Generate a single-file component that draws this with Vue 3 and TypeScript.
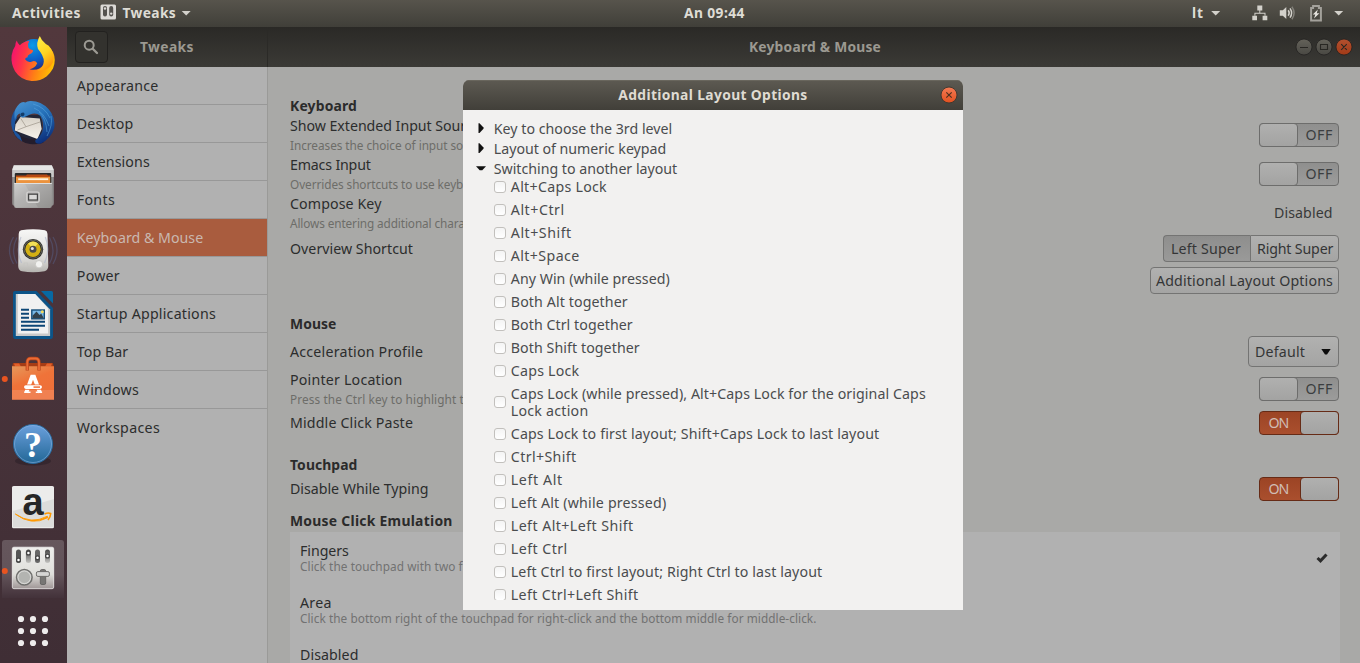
<script setup lang="ts">
interface Label {
  text: string
  /** Drawn width of the label in pixels. */
  w: number
}

const L = (text: string, w: number): Label => ({ text, w })

/** Spreads the letters of an element so that its text takes the given width. */
const vFit = {
  mounted(el: HTMLElement, binding: { value: number }) {
    const count = (el.textContent ?? '').length
    if (count < 2) return
    const range = document.createRange()
    range.selectNodeContents(el)
    const natural = range.getBoundingClientRect().width
    el.style.letterSpacing = `${(binding.value + 0.4 - natural) / (count - 1)}px`
  },
}

const pages: Label[] = [
  L('Appearance', 81),
  L('Desktop', 56),
  L('Extensions', 72.5),
  L('Fonts', 37.5),
  L('Keyboard & Mouse', 126),
  L('Power', 42.5),
  L('Startup Applications', 138.5),
  L('Top Bar', 51),
  L('Windows', 61.5),
  L('Workspaces', 82.5),
]
const current = 'Keyboard & Mouse'

const inputRows = [
  { label: L('Show Extended Input Sources', 197), note: L('Increases the choice of input sources in the Settings application.', 351), control: 'switch' },
  { label: L('Emacs Input', 80.5), note: L('Overrides shortcuts to use keybindings from the Emacs editor.', 339), control: 'switch' },
  { label: L('Compose Key', 91), note: L('Allows entering additional characters.', 204), control: 'value' },
]

const emulation = [
  { label: L('Fingers', 48.5), note: L('Click the touchpad with two fingers for right-click and three fingers for middle-click.', 468), on: true },
  { label: L('Area', 31), note: L('Click the bottom right of the touchpad for right-click and the bottom middle for middle-click.', 516), on: false },
  { label: L('Disabled', 58), note: L("Don't use mouse click emulation.", 178), on: false },
]

const groups = [
  { label: L('Key to choose the 3rd level', 178), open: false },
  { label: L('Layout of numeric keypad', 172), open: false },
  { label: L('Switching to another layout', 183), open: true },
]

const options: Label[][] = [
  [L('Alt+Caps Lock', 95.5)],
  [L('Alt+Ctrl', 53)],
  [L('Alt+Shift', 60)],
  [L('Alt+Space', 68)],
  [L('Any Win (while pressed)', 158.5)],
  [L('Both Alt together', 116.5)],
  [L('Both Ctrl together', 121.5)],
  [L('Both Shift together', 128.5)],
  [L('Caps Lock', 68)],
  [L('Caps Lock (while pressed), Alt+Caps Lock for the original Caps', 414.5), L('Lock action', 77)],
  [L('Caps Lock to first layout; Shift+Caps Lock to last layout', 368)],
  [L('Ctrl+Shift', 65)],
  [L('Left Alt', 51)],
  [L('Left Alt (while pressed)', 155)],
  [L('Left Alt+Left Shift', 122)],
  [L('Left Ctrl', 56)],
  [L('Left Ctrl to first layout; Right Ctrl to last layout', 311)],
  [L('Left Ctrl+Left Shift', 127)],
]

const gridDots = [21, 33, 45]
</script>

<template>
  <div class="screen">
    <header class="topbar">
      <div class="tb-left">
        <span v-fit="68">Activities</span>
        <svg class="app-glyph" width="17" height="17" viewBox="0 0 17 17">
          <rect x="0.5" y="0.5" width="15.5" height="15" rx="1.5" fill="#dcdad6" />
          <rect x="3" y="2" width="4" height="10.5" rx="2" fill="#55534f" />
          <rect x="9.2" y="2" width="4" height="10.5" rx="2" fill="#55534f" />
          <circle cx="5" cy="4.5" r="1.2" fill="#dcdad6" />
          <circle cx="11.2" cy="9.6" r="1.2" fill="#dcdad6" />
        </svg>
        <span v-fit="53">Tweaks</span>
        <i class="down"></i>
      </div>
      <div class="tb-clock"><span v-fit="60">An 09:44</span></div>
      <div class="tb-right">
        <span v-fit="10.5">lt</span>
        <i class="down lang"></i>
        <svg class="net" width="16" height="16" viewBox="0 0 16 16" fill="#d3d1cb">
          <path d="M5.3 0.5h5v5h-5zM0.3 10.7h4.7v4.6H0.3zM10.6 10.7h4.7v4.6h-4.7z" />
          <path d="M7.3 5h1v2.8h5.2v3h-1V8.7H3.4v2.1h-1v-3h4.9z" />
        </svg>
        <svg class="vol" width="16" height="16" viewBox="0 0 16 16">
          <path d="M0.8 5.3h3L7.3 2v12L3.8 10.7h-3z" fill="#d3d1cb" />
          <path d="M9.2 5.2q2 2.8 0 5.6" fill="none" stroke="#d3d1cb" stroke-width="1.5" />
          <path d="M11 3.4q3.2 4.6 0 9.2" fill="none" stroke="#d3d1cb" stroke-width="1.5" />
          <path d="M12.9 1.7q4.4 6.3 0 12.6" fill="none" stroke="#817f78" stroke-width="1.5" />
        </svg>
        <svg class="bat" width="12" height="17" viewBox="0 0 12 17">
          <path d="M1.1 3.1h2V1.1h5.8v2h2V15.4H1.1z" fill="none" stroke="#a3a19b" stroke-width="2" />
          <path d="M7.8 4.6L2.8 9.6h2.5L4 13.4l5.4-5.2H6.8z" fill="#e6e4df" />
        </svg>
        <i class="down last"></i>
      </div>
    </header>

    <div class="desk">
      <nav class="dock">
        <svg class="slot" viewBox="0 0 67 64">
          <defs>
            <linearGradient id="ffBody" x1="0" y1="0.35" x2="1" y2="0.6">
              <stop offset="0" stop-color="#f5156c" />
              <stop offset="0.28" stop-color="#ff3647" />
              <stop offset="0.6" stop-color="#ff7e16" />
              <stop offset="1" stop-color="#ffc400" />
            </linearGradient>
            <linearGradient id="ffTail" x1="0" y1="0" x2="0.4" y2="1">
              <stop offset="0" stop-color="#fff14a" />
              <stop offset="0.6" stop-color="#ffd320" />
              <stop offset="1" stop-color="#ff9a0c" />
            </linearGradient>
            <radialGradient id="ffGlobe" cx="0.45" cy="0.2" r="0.8">
              <stop offset="0" stop-color="#0a9be8" />
              <stop offset="0.6" stop-color="#0d5cc4" />
              <stop offset="1" stop-color="#2a2877" />
            </radialGradient>
          </defs>
          <circle cx="34" cy="28" r="16" fill="url(#ffGlobe)" />
          <path
            d="M16.7 13.6Q17.6 16.5 19.8 18.2Q23.6 14.3 29.3 14.1Q27.4 16.6 28.3 20.6Q29.3 22.8 33 23.3Q33.2 25.8 29.6 27.3Q27.4 28.4 27.4 30.5Q25 30.2 25.2 32.6Q28.2 36.3 32 34.4Q35.5 33.2 37.2 36.3Q35 41.3 29.5 42.3Q39 44.5 43.7 37.2Q46 32 43.3 25.5Q48.5 28 50 21L53.2 25.5Q56.5 33 53 41.5Q50.5 46 46.5 49.4Q40 54.2 31.5 53.9Q20.5 52.8 15 44.2Q10.8 36.8 11.6 28.5Q12.5 22.5 15.2 19Q15.3 16 16.7 13.6z"
            fill="url(#ffBody)"
          />
          <path d="M39.8 9Q35.8 15.8 38 22Q43.8 28.6 43.8 34.5Q43.3 41.6 37.2 43.5Q49 44.2 52.8 35.5Q54.8 27.6 51.2 22Q49 18 45.8 16.9Q41.3 13.6 39.8 9z" fill="url(#ffTail)" />
        </svg>

        <svg class="slot" viewBox="0 0 67 64">
          <defs>
            <linearGradient id="tbBird" x1="0.2" y1="0" x2="0.7" y2="1">
              <stop offset="0" stop-color="#4590cf" />
              <stop offset="0.45" stop-color="#246fb8" />
              <stop offset="1" stop-color="#0c2d78" />
            </linearGradient>
            <linearGradient id="tbMail" x1="0" y1="0" x2="0" y2="1">
              <stop offset="0" stop-color="#d8d2c8" />
              <stop offset="1" stop-color="#f7f2ea" />
            </linearGradient>
          </defs>
          <path d="M13 41Q18 51 30 53Q40 54 44 51L40 41z" fill="#241d2c" />
          <path d="M15.5 18Q10.5 25 11.3 34Q13 45 22 50.5Q20.5 44 16 39.5L17 27z" fill="#1d559f" />
          <path d="M15 31Q17 24.5 24 24L40 24Q45 35 40 47L30 48Q19 46 14.5 39z" fill="#232638" />
          <path d="M15.5 33.5L20.5 26L39.8 27.5L41.7 38L37.4 48L14.8 39.500z" fill="url(#tbMail)" />
          <path d="M20.8 27.5L26 35.7L40 31M26 35.7L17.5 39" fill="none" stroke="#a59d92" stroke-width="0.8" />
          <path d="M30 10Q27 10 25.5 11.5Q20.5 9 15.5 18Q13.5 23 15 29Q16.5 23.500 20 22.500Q19.5 27 23.5 26.500Q27 25 30 23.500Q36 21 40.5 25Q44.5 32 42.5 40Q41 45 35.2 49.500Q35 53.500 41 52.500Q51 47.500 54.300 37Q55.500 26 48.500 18Q40.500 9.500 30 10z" fill="url(#tbBird)" />
          <path d="M33 13Q45 16 50 27M34 17Q44 21 49 35M39 21Q46 27 47 41M51 25Q53 34 47 45" fill="none" stroke="#5ba7df" stroke-width="0.9" opacity="0.6" />
          <path d="M20.5 24.600Q19.8 21.500 23.5 21.500Q25.5 22.800 23.800 24.700Q22 26 20.5 24.600z" fill="#123c69" />
        </svg>

        <svg class="slot" viewBox="0 3 67 64">
          <defs>
            <linearGradient id="fileFront" x1="0" y1="0" x2="1" y2="1">
              <stop offset="0" stop-color="#c7c7c6" />
              <stop offset="0.4" stop-color="#aaa9a8" />
              <stop offset="1" stop-color="#92918f" />
            </linearGradient>
          </defs>
          <path d="M12.2 17L13.8 13.300h38l2 3.900v33.500q0 3-2 3H14.2q-2 0-2-3z" fill="#8f8e8d" />
          <path d="M12.2 18L13.800 13.300h38l2 4.700z" fill="#e6e6e5" />
          <path d="M12.2 18h41.600v7H12.2z" fill="#c9c9c8" />
          <rect x="14.8" y="21" width="36.4" height="10" rx="1" fill="#2c2b2b" />
          <path d="M16 23.500h10l1-1h20l1 1h2v8H16z" fill="#b84a12" />
          <rect x="16" y="25" width="34.2" height="6.500" fill="#ec933e" />
          <rect x="18.2" y="26.300" width="30" height="1.800" fill="#fff4df" />
          <path d="M14.2 31.3h37.6v22.700q0 2-2 2H16.2q-2 0-2-2z" fill="url(#fileFront)" />
          <path d="M14.2 31.500h37.600" stroke="#e0e0df" />
          <path d="M14.2 32H25L38 55.500H14.2z" fill="#fff" opacity="0.12" />
          <rect x="26.800" y="40" width="12.400" height="10.300" rx="1.8" fill="#a8a7a6" stroke="#d5d4d3" stroke-width="1.2" />
          <rect x="28.600" y="42.200" width="8.800" height="5.800" fill="#d9d8d7" stroke="#454545" stroke-width="1.2" />
        </svg>

        <svg class="slot" viewBox="0 0 67 64">
          <defs>
            <linearGradient id="spk" x1="0" y1="0" x2="0" y2="1">
              <stop offset="0" stop-color="#f7f7f6" />
              <stop offset="0.7" stop-color="#d9d8d5" />
              <stop offset="1" stop-color="#b5b4b0" />
            </linearGradient>
          </defs>
          <g fill="none" stroke="#58648f" stroke-width="1.3" opacity="0.45">
            <path d="M17 18.5Q10 31.5 17 44.5M13.5 18Q5.5 31.5 13.5 45M49.5 18.5Q56.5 31.5 49.5 44.5M53 18Q61 31.5 53 45" />
          </g>
          <path d="M21 11.3Q33 9.3 45 11.3Q47.500 12 47.5 15L48.3 47Q48.3 51 44.5 52.3Q33 54 22 52.3Q18.3 51.5 18.2 47L18.7 15Q18.7 12 21 11.3z" fill="url(#spk)" />
          <circle cx="33" cy="30.2" r="10.2" fill="#2f2f2c" />
          <circle cx="33" cy="30.2" r="9" fill="none" stroke="#77756b" stroke-width="0.7" />
          <circle cx="33" cy="30.2" r="7.7" fill="#d3b014" />
          <path d="M28 24.5Q33 20.5 38 24.5L33 30z" fill="#f1df58" />
          <circle cx="33" cy="30.2" r="3.5" fill="#4a4a4a" />
          <circle cx="32.3" cy="29.6" r="1.5" fill="#e5e5e5" />
          <rect x="24" y="44" width="3.5" height="3.5" fill="none" stroke="#c6c5c2" stroke-width="0.7" />
          <circle cx="39" cy="45.2" r="3.7" fill="#f2f2f0" stroke="#c4c3bf" stroke-width="0.8" />
          <path d="M21 18Q15.5 31 21.5 44M45.3 18Q50.5 31 44.5 44" stroke="#aab2ca" fill="none" stroke-width="1.2" opacity="0.6" />
        </svg>

        <svg class="slot" viewBox="0 0 67 64">
          <path d="M15 8h21.5L53 25v28q0 3-2.2 3H15.2q-2.2 0-2.2-3V10q0-2 2-2z" fill="#0c5488" />
          <path d="M41 8h10.5q1.5 0 1.5 1.5v11z" fill="#0869a3" />
          <path d="M15.8 11h19.3l15 15.5v26.4H15.8z" fill="#c9c9c9" />
          <path d="M15.8 11h19.3l13 14.5v25H17.8V11z" fill="#f1f1f1" />
          <path d="M21 26.8h8M21 30.8h8M21 34.8h8M21 38.8h24M21 42.8h24M21 46.8h18" stroke="#0c4676" stroke-width="2" />
          <rect x="31.8" y="27" width="12.5" height="8.8" fill="#78b8e6" stroke="#164d78" stroke-width="1.4" />
          <circle cx="42.3" cy="28.7" r="1.5" fill="#f5d958" />
          <path d="M32.5 35.3v-2.5l4-4.3 3 3.5 1.7-1.4 2.6 4.7z" fill="#33414b" />
        </svg>

        <svg class="slot" viewBox="0 0 67 64">
          <defs>
            <linearGradient id="bag" x1="0" y1="0" x2="0.5" y2="1">
              <stop offset="0" stop-color="#e6985b" />
              <stop offset="0.5" stop-color="#ef7339" />
              <stop offset="1" stop-color="#ee6f39" />
            </linearGradient>
          </defs>
          <circle cx="4.8" cy="32" r="3" fill="#e95420" />
          <path d="M13 16h39.8l1 4H12z" fill="#a63c15" />
          <path d="M14 16.5h5l2 3h-6zM52 16.5h-5l-2 3h6z" fill="#e4602a" />
          <path d="M12 19.3h42v33.5H12z" fill="url(#bag)" />
          <path d="M12 43h42v9.8H12z" fill="#fff" opacity="0.12" />
          <path d="M27.3 23.5v-8q0-4 3.5-4h4.7q3.5 0 3.5 4v8" fill="none" stroke="#b7451b" stroke-width="3.3" />
          <path d="M27.3 23v-7.5q0-4 3.5-4h4.7q3.5 0 3.5 4V23" fill="none" stroke="#ec6b35" stroke-width="1.8" />
          <path d="M26.3 45.5L32 29.800h2L39.900 45.5" fill="none" stroke="#fff" stroke-width="3.9" />
          <path d="M24.2 44.4h6.3v1.7h-6.3zM35.8 44.4h6.3v1.7h-6.3z" fill="#fff" />
          <rect x="23.2" y="37.5" width="19.6" height="5.2" rx="2.6" fill="#ee6d37" />
          <rect x="24" y="38.3" width="18" height="3.6" rx="1.8" fill="#fff" />
          <path d="M33.5 40.1h6.500" stroke="#ee6d37" stroke-width="1.5" />
        </svg>

        <svg class="slot" viewBox="0 0 67 64">
          <defs>
            <linearGradient id="help" x1="0" y1="0" x2="0" y2="1">
              <stop offset="0" stop-color="#6ba0dd" />
              <stop offset="1" stop-color="#226796" />
            </linearGradient>
          </defs>
          <ellipse cx="33" cy="50" rx="18" ry="4.5" fill="#2c1f28" opacity="0.6" />
          <circle cx="33" cy="33" r="19.5" fill="url(#help)" stroke="#2a6a9d" />
          <circle cx="33" cy="33" r="18.5" fill="none" stroke="#8ab4e4" stroke-width="0.8" opacity="0.7" />
          <text x="33" y="46" text-anchor="middle" class="help-mark">?</text>
        </svg>

        <svg class="slot" viewBox="0 0 67 64">
          <rect x="12" y="11" width="42" height="42.3" rx="1.6" fill="#ececeb" />
          <path d="M13 52V36L54 24v28z" fill="#dcdcdb" />
          <text x="33" y="39.6" text-anchor="middle" class="amz">a</text>
          <path d="M15.3 39Q31 50 47.3 41.2L48 42.6Q31.5 51.5 15.3 39z" fill="#ff9800" stroke="#ff9800" stroke-width="0.9" />
          <path d="M44.5 39Q48 37.3 50.7 38.5Q50.6 42 48 45" fill="none" stroke="#ff9800" stroke-width="1.6" />
        </svg>

        <svg class="slot" viewBox="0 0 67 64">
          <defs>
            <linearGradient id="hl" x1="0" y1="0" x2="0" y2="1">
              <stop offset="0" stop-color="#66575d" />
              <stop offset="0.6" stop-color="#625359" />
              <stop offset="1" stop-color="#43323a" />
            </linearGradient>
            <linearGradient id="twk" x1="0" y1="0" x2="0" y2="1">
              <stop offset="0" stop-color="#eeeeec" />
              <stop offset="0.65" stop-color="#dfdfdb" />
              <stop offset="1" stop-color="#9f9696" />
            </linearGradient>
            <linearGradient id="sl" x1="0" y1="0" x2="0" y2="1">
              <stop offset="0" stop-color="#454545" />
              <stop offset="1" stop-color="#c4c4c1" />
            </linearGradient>
          </defs>
          <path d="M2 4q0-3 3-3h56q3 0 3 3v55H2z" fill="url(#hl)" />
          <circle cx="4.8" cy="32" r="3" fill="#e95420" />
          <rect x="12.3" y="8.2" width="41.4" height="41.5" rx="1.6" fill="url(#twk)" stroke="#fafaf9" stroke-width="0.7" />
          <rect x="16" y="10.5" width="5" height="13.5" rx="2.5" fill="#555" />
          <rect x="25.9" y="10.5" width="5" height="13.5" rx="2.5" fill="url(#sl)" />
          <rect x="35" y="10.5" width="5" height="13.5" rx="2.5" fill="#666" />
          <rect x="45" y="10.5" width="5" height="13.5" rx="2.5" fill="url(#sl)" />
          <g fill="#fff" stroke="#444" stroke-width="1.3">
            <circle cx="18.5" cy="21" r="1.9" />
            <circle cx="28.4" cy="14" r="1.9" />
            <circle cx="37.5" cy="18.8" r="1.9" />
            <circle cx="47.5" cy="17" r="1.9" />
          </g>
          <circle cx="24.3" cy="38.3" r="7.8" fill="#c9c9c7" stroke="#6f6f6d" stroke-width="1.5" />
          <circle cx="24.3" cy="38.3" r="6.3" fill="#b3b4b1" stroke="#dededc" stroke-width="0.8" />
          <rect x="40.3" y="30.5" width="5.4" height="15" rx="1.5" fill="#777674" stroke="#5d5c5b" stroke-width="0.8" />
          <rect x="36.4" y="32.6" width="13" height="4.8" rx="1.5" fill="#d6d6d4" stroke="#6d6c6a" />
        </svg>

        <svg class="slot apps" viewBox="0 0 67 60" fill="#eeecec">
          <template v-for="y in gridDots" :key="y">
            <circle v-for="x in gridDots" :key="x" :cx="x" :cy="y - 5" r="3.1" />
          </template>
        </svg>
      </nav>

      <section class="window">
        <header class="titlebar">
          <div class="tl-side">
            <span class="search">
              <svg width="16" height="16" viewBox="0 0 16 16" fill="none" stroke="#9c9a93">
                <circle cx="6.2" cy="6.2" r="4.5" stroke-width="2" />
                <path d="M9.7 9.7l4.3 4.3" stroke-width="2.3" stroke-linecap="round" />
              </svg>
            </span>
            <span class="tl-name" v-fit="53">Tweaks</span>
          </div>
          <div class="tl-main"><span v-fit="131.5">Keyboard &amp; Mouse</span></div>
          <div class="tl-buttons">
            <svg width="60" height="18" viewBox="0 0 60 18">
              <defs>
                <linearGradient id="wb" x1="0" y1="0" x2="0" y2="1">
                  <stop offset="0" stop-color="#64625a" />
                  <stop offset="1" stop-color="#494843" />
                </linearGradient>
                <linearGradient id="wc" x1="0" y1="0" x2="0" y2="1">
                  <stop offset="0" stop-color="#b2502f" />
                  <stop offset="1" stop-color="#a23a17" />
                </linearGradient>
              </defs>
              <circle cx="10" cy="9" r="8" fill="url(#wb)" stroke="#22211f" stroke-width="0.8" />
              <circle cx="30" cy="9" r="8" fill="url(#wb)" stroke="#22211f" stroke-width="0.8" />
              <circle cx="50" cy="9" r="8" fill="url(#wc)" stroke="#22211f" stroke-width="0.8" />
              <path d="M6 9.5h8M26.5 6.5h7v5h-7zM47.2 6.2l5.6 5.6M52.8 6.2l-5.6 5.6" fill="none" stroke="#282723" stroke-width="1.1" />
            </svg>
          </div>
        </header>

        <div class="panes">
          <ul class="sidebar">
            <li v-for="p in pages" :key="p.text" :class="{ active: p.text === current }">
              <span v-fit="p.w">{{ p.text }}</span>
            </li>
          </ul>

          <main class="content">
            <h2><span v-fit="66.5">Keyboard</span></h2>
            <div v-for="r in inputRows" :key="r.label.text" class="row tall">
              <div class="texts">
                <div class="lbl"><span v-fit="r.label.w">{{ r.label.text }}</span></div>
                <div class="note"><span v-fit="r.note.w">{{ r.note.text }}</span></div>
              </div>
              <div v-if="r.control === 'switch'" class="switch"><b></b><span v-fit="26.5">OFF</span></div>
              <span v-else class="value" v-fit="58">Disabled</span>
            </div>
            <div class="row shortcut">
              <div class="lbl"><span v-fit="122.5">Overview Shortcut</span></div>
              <div class="pair">
                <button class="btn pressed"><span v-fit="69.5">Left Super</span></button>
                <button class="btn right"><span v-fit="76">Right Super</span></button>
              </div>
            </div>
            <div class="row extra">
              <button class="btn wide"><span v-fit="176.5">Additional Layout Options</span></button>
            </div>

            <h2 class="mouse"><span v-fit="46">Mouse</span></h2>
            <div class="row accel">
              <div class="lbl"><span v-fit="132.5">Acceleration Profile</span></div>
              <button class="btn combo"><span v-fit="49.5">Default</span><i></i></button>
            </div>
            <div class="row tall">
              <div class="texts">
                <div class="lbl"><span v-fit="112">Pointer Location</span></div>
                <div class="note"><span v-fit="233.5">Press the Ctrl key to highlight the pointer.</span></div>
              </div>
              <div class="switch"><b></b><span v-fit="26.5">OFF</span></div>
            </div>
            <div class="row short">
              <div class="lbl"><span v-fit="122.5">Middle Click Paste</span></div>
              <div class="switch on"><span v-fit="20.5">ON</span><b></b></div>
            </div>

            <h2 class="touch"><span v-fit="67">Touchpad</span></h2>
            <div class="row short">
              <div class="lbl"><span v-fit="138">Disable While Typing</span></div>
              <div class="switch on"><span v-fit="20.5">ON</span><b></b></div>
            </div>

            <h2 class="emul"><span v-fit="162">Mouse Click Emulation</span></h2>
            <div class="box">
              <div v-for="e in emulation" :key="e.label.text" class="choice">
                <div>
                  <div class="lbl"><span v-fit="e.label.w">{{ e.label.text }}</span></div>
                  <div class="note"><span v-fit="e.note.w">{{ e.note.text }}</span></div>
                </div>
                <svg v-if="e.on" class="tick" width="12" height="10" viewBox="0 0 12 10">
                  <path d="M1.5 5l3 2.8 6-6.3" fill="none" stroke="#2b2b2b" stroke-width="3" />
                </svg>
              </div>
            </div>
          </main>
        </div>
      </section>
    </div>

    <div class="dialog">
      <header class="dlg-title">
        <span v-fit="188.5">Additional Layout Options</span>
        <svg class="dlg-close" width="18" height="18" viewBox="0 0 18 18">
          <defs>
            <linearGradient id="dc" x1="0" y1="0" x2="0" y2="1">
              <stop offset="0" stop-color="#f37b55" />
              <stop offset="1" stop-color="#e2501f" />
            </linearGradient>
          </defs>
          <circle cx="9" cy="9" r="8" fill="url(#dc)" stroke="#38352f" stroke-width="0.9" />
          <path d="M6.3 6.3l5.4 5.4M11.7 6.3l-5.4 5.4" stroke="#50301f" stroke-width="1.2" />
        </svg>
      </header>
      <div class="dlg-body">
        <div v-for="g in groups" :key="g.label.text" class="group">
          <svg width="12" height="12" viewBox="0 0 12 12">
            <path v-if="g.open" d="M1 3.2h10L7.3 7.2H4.7z" fill="#111" />
            <path v-else d="M3.5 0.2h1l4 4.2v1.3l-4 4.4h-1z" fill="#111" />
          </svg>
          <span v-fit="g.label.w">{{ g.label.text }}</span>
        </div>
        <div class="options">
          <label v-for="(o, i) in options" :key="i" class="option">
            <i class="check"></i>
            <span class="lines"><span v-for="l in o" :key="l.text"><span v-fit="l.w">{{ l.text }}</span></span></span>
          </label>
        </div>
      </div>
    </div>
  </div>
</template>

<style>
body {
  overflow: hidden;
}
</style>

<style scoped>
.screen {
  position: relative;
  width: 1360px;
  height: 663px;
  overflow: hidden;
  font-family: "Noto Sans", "Open Sans", sans-serif;
  font-size: 14.2px;
  line-height: 20px;
  color: #2c2d2d;
  white-space: nowrap;
}
.topbar {
  box-sizing: border-box;
  height: 27px;
  padding-bottom: 1px;
  display: grid;
  grid-template-columns: 684px 1fr 168px;
  align-items: center;
  background: linear-gradient(#57544c, #403f39);
  color: #dedcd5;
  font-weight: 700;
  font-size: 13.8px;
}
.tb-left {
  display: flex;
  align-items: center;
  padding-left: 12px;
}
.app-glyph {
  margin: -1px 5px 0 19.5px;
}
.down {
  width: 10px;
  height: 5px;
  margin-left: 5px;
  background: #d3d1cb;
  clip-path: polygon(0 0, 100% 0, 50% 100%);
}
.tb-right {
  display: flex;
  align-items: center;
}
.lang {
  margin-left: 7px;
}
.net {
  margin-left: 31px;
}
.vol {
  margin-left: 11.5px;
}
.bat {
  margin-left: 14.5px;
}
.down.last {
  margin-left: 12px;
}
.desk {
  display: flex;
  height: 636px;
}
.dock {
  width: 67px;
  flex: none;
  display: flex;
  flex-direction: column;
  background: linear-gradient(#52383d, #4a343b 45%, #3f2e35);
}
.slot {
  display: block;
  width: 67px;
  height: 64px;
  flex: none;
}
.apps {
  height: 60px;
}
.help-mark {
  font: 700 36px "Liberation Serif", serif;
  fill: #fff;
}
.amz {
  font: 700 38px "Liberation Sans", sans-serif;
  fill: #262626;
}
.window {
  flex: 1;
  display: flex;
  flex-direction: column;
  background: #a9a9a7;
  min-width: 0;
}
.titlebar {
  height: 40px;
  flex: none;
  display: grid;
  grid-template-columns: 201px 1fr 66px;
  align-items: center;
  background: linear-gradient(#2a2926, #3b3a36);
  color: #9b9991;
  font-weight: 700;
  font-size: 13.8px;
}
.tl-side {
  height: 40px;
  display: flex;
  align-items: center;
  border-right: 1px solid #2b2a27;
}
.search {
  box-sizing: border-box;
  width: 33px;
  height: 32px;
  margin-left: 7.5px;
  border: 1px solid #22211f;
  border-radius: 4px;
  display: flex;
  align-items: center;
  justify-content: center;
  background: #33322e;
}
.tl-name {
  margin-left: 32.5px;
}
.tl-main {
  text-align: center;
  padding-left: 68px;
}
.tl-buttons {
  display: flex;
}
.panes {
  flex: 1;
  display: flex;
  min-height: 0;
}
.sidebar {
  width: 200px;
  flex: none;
  margin: 0;
  padding: 0;
  list-style: none;
  background: #b1b1b1;
  border-right: 1px solid #9a9a98;
}
.sidebar li {
  box-sizing: border-box;
  height: 38px;
  padding: 9px 0 0 9.8px;
  border-bottom: 1px solid #989898;
}
.sidebar li:last-child {
  border: 0;
}
.sidebar .active {
  background: #a95c3e;
  color: #c9b8b0;
}
.content {
  flex: 1;
  min-width: 0;
  overflow: hidden;
  padding: 29px 20px 0 21px;
}
h2 {
  margin: 0;
  height: 20px;
  padding-left: 1px;
  font-size: 13.9px;
  font-weight: 700;
  line-height: 20px;
  color: #2b2b2b;
}
.mouse {
  margin-top: 17px;
}
.touch {
  margin-top: 18px;
}
.emul {
  margin-top: 8px;
}
.row {
  display: flex;
  align-items: center;
  justify-content: space-between;
  padding: 0 1px 0 0;
}
.tall {
  height: 39px;
}
.tall .switch,
.tall .value {
  margin-bottom: 2px;
}
.shortcut {
  height: 31px;
}
.extra {
  height: 33px;
  justify-content: flex-end;
}
.accel {
  height: 36px;
}
.short {
  height: 28px;
}
.lbl {
  height: 20px;
}
.row .lbl {
  padding-left: 1px;
}
.note {
  height: 19px;
  line-height: 19px;
  font-size: 11.8px;
  color: #6d6d69;
}
.row .note {
  padding-left: 1px;
}
.value {
  margin-right: 6.5px;
  color: #383939;
}
.switch {
  box-sizing: border-box;
  width: 80px;
  height: 24px;
  display: flex;
  border: 1px solid #6d6d6c;
  border-radius: 4px;
  background: linear-gradient(#8f8f8e, #9c9c9b);
  color: #3b3e40;
  line-height: 22px;
}
.switch b {
  box-sizing: border-box;
  width: 39px;
  margin: -1px;
  border: 1px solid #6d6d6c;
  border-radius: 4px;
  background: linear-gradient(#b0b0af, #a3a3a2);
}
.switch span {
  margin-left: 8.5px;
}
.on {
  background: linear-gradient(#9c4425, #aa4f2e);
  border-color: #662b16;
  color: #d0bdb4;
  justify-content: space-between;
}
.on b {
  border-color: #662b16;
}
.btn {
  box-sizing: border-box;
  height: 27px;
  padding: 0 5px;
  border: 1px solid #747473;
  border-radius: 4px;
  background: linear-gradient(#b1b1b0, #a4a4a3);
  color: #343536;
  font: inherit;
  line-height: 20px;
  display: flex;
  align-items: center;
}
.pair {
  display: flex;
}
.pressed {
  width: 87px;
  padding-left: 7px;
  border-radius: 4px 0 0 4px;
  border-right: 0;
  background: linear-gradient(#8e8e8d, #9a9a99);
}
.right {
  width: 89px;
  padding-left: 6px;
  border-radius: 0 4px 4px 0;
}
.wide {
  width: 189px;
}
.combo {
  width: 91px;
  height: 31px;
  margin-bottom: 1px;
  padding: 0 6px;
  justify-content: space-between;
}
.combo i {
  width: 10px;
  height: 6px;
  margin-right: 1px;
  background: #0c0c0c;
  clip-path: polygon(0 0, 100% 0, 60% 100%, 40% 100%);
}
.box {
  margin-top: 1px;
  margin-left: 1px;
  height: 131px;
  padding: 10px 12px 0 10px;
  background: #b1b1b1;
}
.choice {
  height: 52px;
  display: flex;
  justify-content: space-between;
}
.choice .lbl {
  height: 18px;
  line-height: 18px;
}
.choice .note {
  height: 13px;
  line-height: 13px;
  color: #727272;
}
.tick {
  margin-top: 11px;
}
.dialog {
  position: absolute;
  left: 463px;
  top: 80px;
  width: 500px;
  height: 530px;
  border-radius: 6px 6px 0 0;
  overflow: hidden;
  background: #f2f1f0;
  color: #4a4c4e;
}
.dlg-title {
  height: 30px;
  display: flex;
  align-items: center;
  justify-content: center;
  background: linear-gradient(#5d5a52, #413f39);
  box-shadow: inset 0 1px #69665d;
  color: #dfdbd2;
  font-weight: 700;
  font-size: 13.8px;
}
.dlg-close {
  position: absolute;
  right: 5px;
  top: 6px;
}
.dlg-body {
  box-sizing: border-box;
  height: 490px;
  padding-top: 9px;
  overflow: hidden;
}
.group {
  height: 20px;
  display: flex;
  align-items: center;
  padding-left: 12px;
}
.group span {
  margin-left: 6.8px;
}
.options {
  margin-top: -4px;
  padding-left: 31px;
}
.option {
  display: flex;
  align-items: center;
  padding: 3px 0;
}
.check {
  box-sizing: border-box;
  width: 12px;
  height: 12px;
  border: 1px solid #c2c0bd;
  border-radius: 3px;
  background: linear-gradient(#f4f4f4, #fff);
}
.lines {
  display: flex;
  flex-direction: column;
  margin-left: 4.8px;
  line-height: 17px;
}
</style>
